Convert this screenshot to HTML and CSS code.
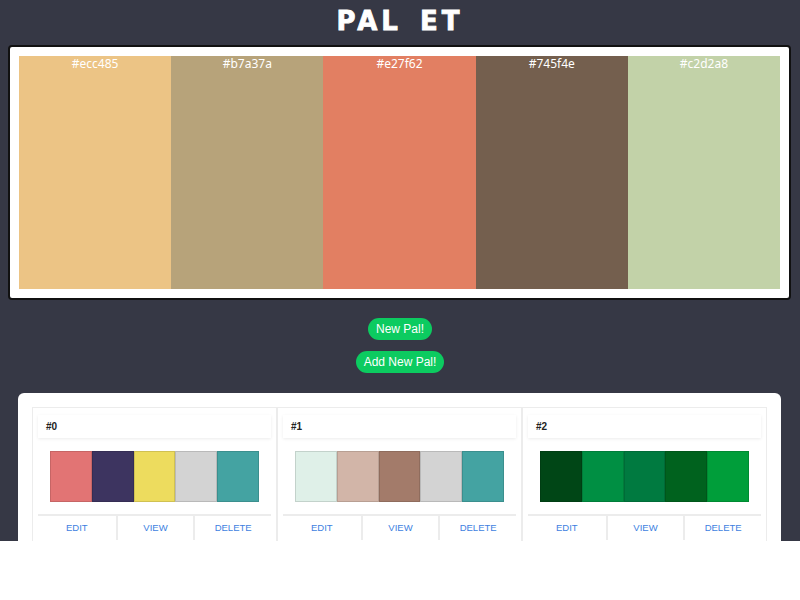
FILE: index.html
```html
<!DOCTYPE html>
<html>
<head>
<meta charset="utf-8">
<link rel="stylesheet" href="styles.css">
</head>
<body>
<div class="app">
  <h1 class="title">PAL<span class="gap"></span>ET</h1>
  <div class="current">
    <div class="palette">
      <div class="col" style="background:#ecc485"><span>#ecc485</span></div>
      <div class="col" style="background:#b7a37a"><span>#b7a37a</span></div>
      <div class="col" style="background:#e27f62"><span>#e27f62</span></div>
      <div class="col" style="background:#745f4e"><span>#745f4e</span></div>
      <div class="col" style="background:#c2d2a8"><span>#c2d2a8</span></div>
    </div>
  </div>
  <div class="actions">
    <button class="pill">New Pal!</button>
    <button class="pill">Add New Pal!</button>
  </div>
  <div class="saved">
    <div class="card">
      <div class="card-head">#0</div>
      <div class="swatches">
        <div class="sw" style="background:#e27474"></div>
        <div class="sw" style="background:#3d3460"></div>
        <div class="sw" style="background:#eddc5e"></div>
        <div class="sw" style="background:#d3d3d3"></div>
        <div class="sw" style="background:#44a3a2"></div>
      </div>
      <div class="card-actions"><a>EDIT</a><a>VIEW</a><a>DELETE</a></div>
    </div>
    <div class="card">
      <div class="card-head">#1</div>
      <div class="swatches">
        <div class="sw" style="background:#dff0e8"></div>
        <div class="sw" style="background:#d2b5a8"></div>
        <div class="sw" style="background:#a37b6a"></div>
        <div class="sw" style="background:#d3d3d3"></div>
        <div class="sw" style="background:#44a3a2"></div>
      </div>
      <div class="card-actions"><a>EDIT</a><a>VIEW</a><a>DELETE</a></div>
    </div>
    <div class="card">
      <div class="card-head">#2</div>
      <div class="swatches">
        <div class="sw" style="background:#004616"></div>
        <div class="sw" style="background:#008f43"></div>
        <div class="sw" style="background:#007a40"></div>
        <div class="sw" style="background:#00621e"></div>
        <div class="sw" style="background:#009e3a"></div>
      </div>
      <div class="card-actions"><a>EDIT</a><a>VIEW</a><a>DELETE</a></div>
    </div>
  </div>
</div>
</body>
</html>
```
FILE: styles.css
```css
html, body {
  margin: 0;
  padding: 0;
  background: #fff;
}
.app {
  height: 541px;
  overflow: hidden;
  background: #363845;
  font-family: "Liberation Sans", Arial, sans-serif;
}
.title {
  margin: 0;
  height: 45px;
  padding-top: 4px;
  box-sizing: border-box;
  text-align: center;
  color: #fff;
  font-family: "DejaVu Sans", sans-serif;
  font-weight: 900;
  font-size: 26px;
  line-height: 34px;
  letter-spacing: 4px;
  -webkit-text-stroke: 0.8px #fff;
}
.title .gap {
  display: inline-block;
  width: 18px;
}
.current {
  margin: 0 9px 0 8px;
  background: #fff;
  border: 2px solid #111;
  border-radius: 4px;
  padding: 9px;
}
.palette {
  display: flex;
  height: 233px;
}
.col {
  flex: 1;
  text-align: center;
  color: #fff;
  font-family: "Noto Sans", sans-serif;
  font-weight: 400;
  font-size: 12px;
  line-height: 14px;
  padding-top: 1px;
}
.actions {
  display: flex;
  flex-direction: column;
  align-items: center;
  gap: 11px;
  padding: 18px 0 20px;
}
.pill {
  height: 22px;
  border: none;
  border-radius: 11px;
  background: #0ccb60;
  color: #fff;
  font-family: "Liberation Sans", Arial, sans-serif;
  font-size: 12px;
  padding: 0 8px;
}
.saved {
  margin: 0 19px 0 18px;
  background: #fff;
  border-radius: 6px;
  padding: 14px 14px 0;
  display: grid;
  grid-template-columns: repeat(3, 1fr);
}
.card {
  border: 1px solid #ececec;
  padding: 7px 5px 0;
  height: 200px;
}
.card-head {
  height: 23px;
  line-height: 23px;
  padding-left: 8px;
  font-size: 10px;
  font-weight: bold;
  color: #222;
  background: #fff;
  box-shadow: 0 1px 3px rgba(0,0,0,0.08);
}
.swatches {
  display: flex;
  width: 209px;
  height: 51px;
  margin: 13px auto 12px;
}
.sw {
  flex: 1;
  box-shadow: inset 0 0 0 1px rgba(0,0,0,0.12);
}
.card-actions {
  display: grid;
  grid-template-columns: repeat(3, 1fr);
  border-top: 2px solid #ececec;
}
.card-actions a {
  text-align: center;
  font-size: 9.5px;
  color: #3e7fdf;
  line-height: 24px;
  border-left: 2px solid #ececec;
}
.card-actions a:first-child {
  border-left: none;
}
```
